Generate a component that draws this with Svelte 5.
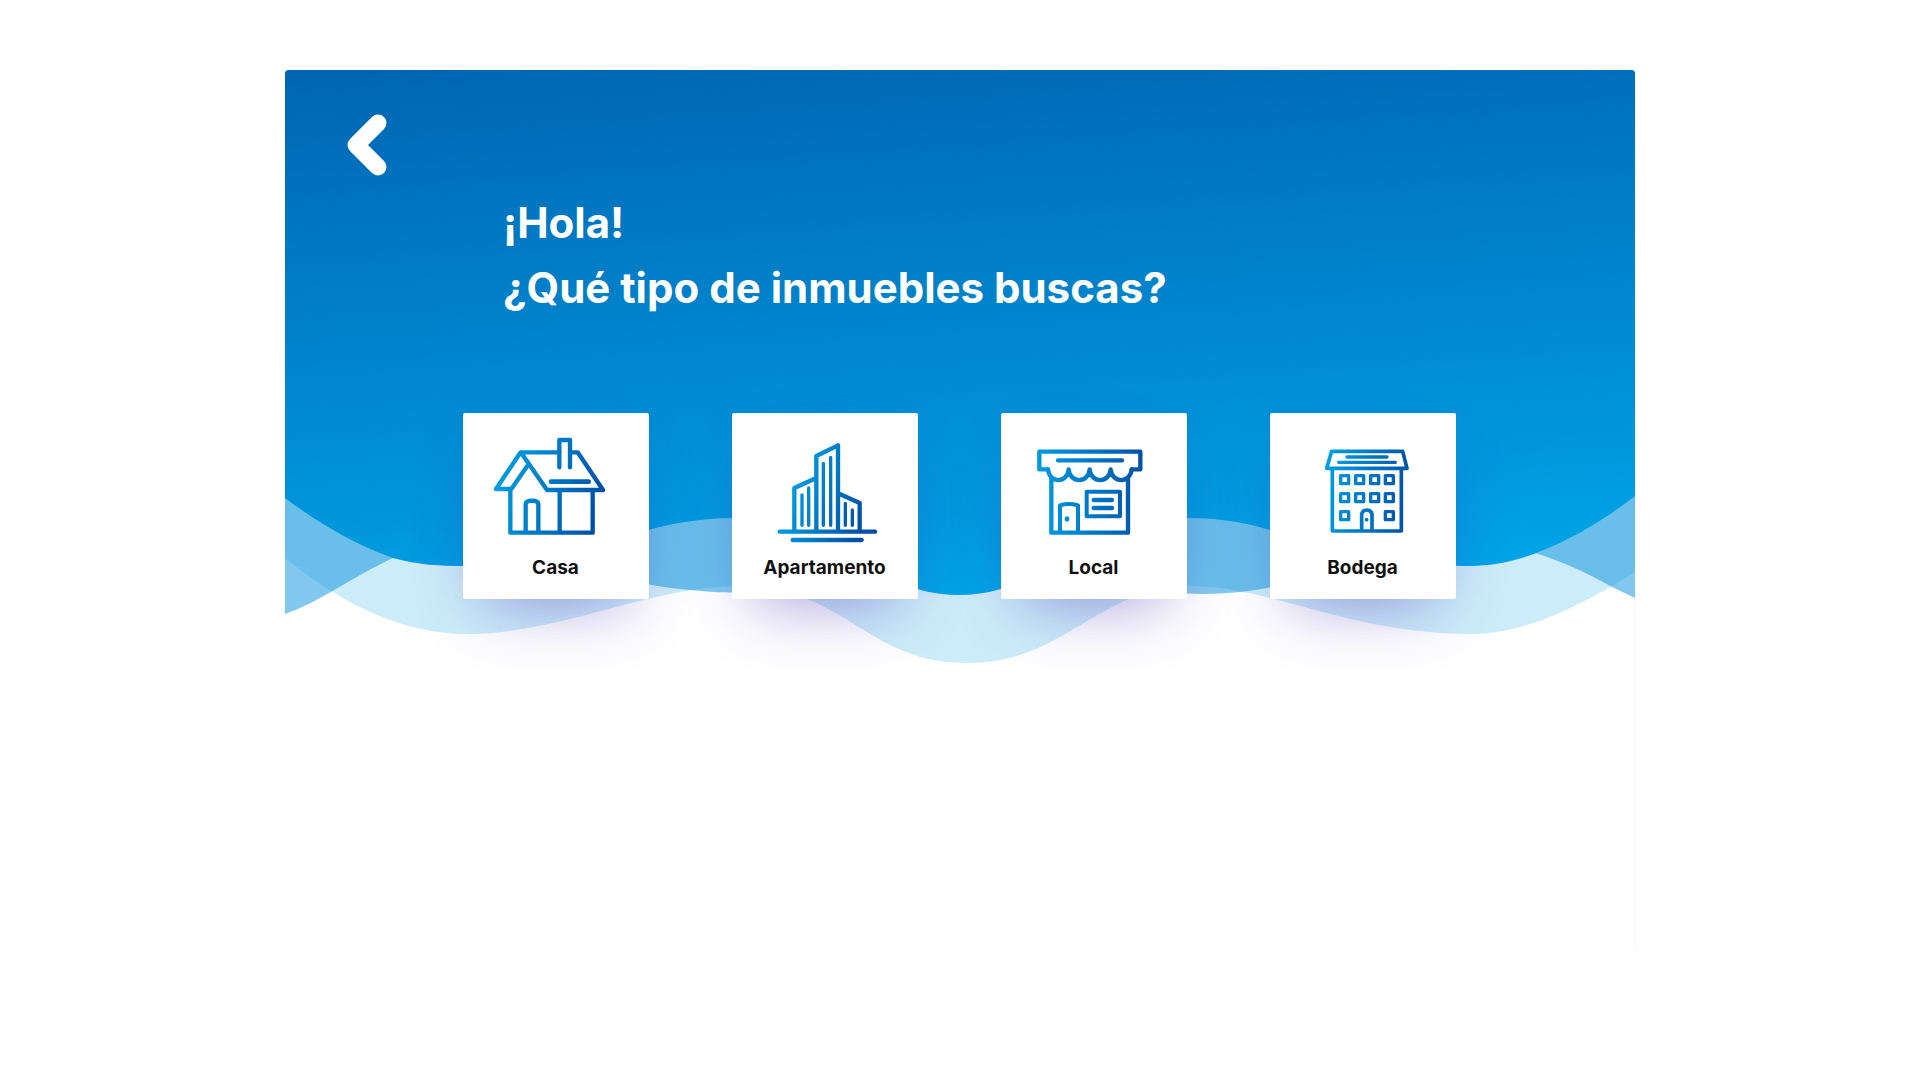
<script>
  const windows = [
    ...[237, 291].flatMap((y) => [284, 329, 374, 418].map((x) => ({ x, y }))),
    { x: 284, y: 345 },
    { x: 418, y: 345 },
  ];

  const types = [
    {
      id: 'casa',
      label: 'Casa',
      viewBox: '68 37 558 429',
      from: [180, 200],
      to: [480, 300],
      shapes: [
        { w: 13, d: 'M357 155H241L167 265H213L265 190M390 155H412L488 268H320L245 160M210 265V396H457V268M358 268V396' },
        { w: 13, d: 'M357 200V118H389V200' },
        { w: 14, d: 'M332 243H445' },
        { w: 13, d: 'M256 392V310C258 297 292 297 294 310V392' },
      ],
    },
    {
      id: 'apartamento',
      label: 'Apartamento',
      viewBox: '65 37 558 429',
      from: [230, 270],
      to: [460, 350],
      shapes: [
        { w: 13, d: 'M252 390V262L318 232M318 390V166L383 134V390M388 280L448 307V390M208 393H494M247 418H454' },
        { w: 10, d: 'M275 283V374M295 262V374M339 188V374M361 170V374M405 308V374M426 328V374' },
      ],
    },
    {
      id: 'local',
      label: 'Local',
      viewBox: '63 37 558 429',
      from: [160, 270],
      to: [500, 240],
      shapes: [
        { w: 13, d: 'M204 206H178V153H481V206H455M214 235V396H444V235' },
        { w: 13, d: 'M204 206C208 249 262 249 266 206C270 249 325 249 329 206C333 249 388 249 392 206C396 249 451 249 455 206' },
        { w: 13, d: 'M234 179H426M341 298H396M341 322H396' },
        { w: 12, d: 'M320 273H420V347H320ZM240 392V314Q267 306 294 314V392' },
        { w: 14, d: 'M261 354V356' },
      ],
    },
    {
      id: 'bodega',
      label: 'Bodega',
      viewBox: '60 37 558 429',
      from: [220, 270],
      to: [480, 300],
      shapes: [
        { w: 11, d: 'M245 152H458L471 203H230ZM247 203V391H454V203M335 388V340A16 16 0 0 1 366 340V388' },
        { w: 10, d: 'M291 169H411M266 185H436' },
        { w: 10, d: windows.map(({ x, y }) => `M${x - 12} ${y - 12}h24v24h-24z`).join('') },
        { w: 11, d: 'M350 357V357' },
      ],
    },
  ];

  let selected = $state('');
</script>

<main class="panel">
  <section class="hero">
    <svg class="waves" viewBox="285 70 1350 600" preserveAspectRatio="none" aria-hidden="true">
      <defs>
        <linearGradient id="sky" gradientUnits="userSpaceOnUse" x1="285" y1="70" x2="325" y2="642">
          <stop offset="0" stop-color="#0065b2" />
          <stop offset="1" stop-color="#00a3e7" />
        </linearGradient>
      </defs>
      <path
        class="wave-light"
        d="M285 70V558C340 602 400 634 467 634C560 634 650 586 740 586C845 586 865 663 968 663C1065 663 1100 586 1190 586C1270 586 1350 634 1470 634C1530 634 1590 600 1635 572V70Z"
      />
      <path
        class="wave-mid"
        d="M285 70V614C320 602 350 578 393 558C440 535 480 545 520 552C570 562 620 583 680 589C760 598 800 590 850 570H1080C1130 590 1180 598 1240 592C1330 582 1380 545 1450 540C1490 536 1560 556 1612 587L1635 598V70Z"
      />
      <path
        class="wave-dark"
        d="M285 70V498C320 524 352 543 393 558C418 565 440 566 463 566C540 566 580 545 648 530C680 521 710 518 735 518C800 518 860 570 917 589C945 597 973 597 1001 589C1060 570 1120 518 1187 518C1215 518 1240 521 1270 530C1340 545 1390 566 1466 566C1490 566 1515 562 1541 551C1572 539 1604 520 1635 496V70Z"
      />
    </svg>

    <div class="content">
      <button class="back" type="button" aria-label="Volver">
        <svg viewBox="0 0 40 62" aria-hidden="true">
          <path d="M31 9L9 31L31 53" />
        </svg>
      </button>

      <h1 class="title">
        <span>¡Hola!</span>
        <span>¿Qué tipo de inmuebles buscas?</span>
      </h1>

      <div class="cards">
        {#each types as type (type.id)}
          <button
            class="card"
            type="button"
            aria-pressed={selected === type.id}
            onclick={() => (selected = type.id)}
          >
            <svg class="icon" viewBox={type.viewBox} aria-hidden="true">
              <defs>
                <linearGradient
                  id={`ink-${type.id}`}
                  gradientUnits="userSpaceOnUse"
                  x1={type.from[0]}
                  y1={type.from[1]}
                  x2={type.to[0]}
                  y2={type.to[1]}
                >
                  <stop offset="0" stop-color="#00a0e3" />
                  <stop offset="1" stop-color="#004fa6" />
                </linearGradient>
              </defs>
              {#each type.shapes as shape}
                <path d={shape.d} stroke={`url(#ink-${type.id})`} stroke-width={shape.w} />
              {/each}
            </svg>
            <span class="label">{type.label}</span>
          </button>
        {/each}
      </div>
    </div>
  </section>
</main>

<style>
  :global(body) {
    margin: 0;
    background: #fff;
  }

  .panel {
    box-sizing: border-box;
    width: 92%;
    max-width: 1350px;
    min-height: calc(100vh - 200px);
    margin: 70px auto;
    border-radius: 4px;
    box-shadow: 1px 0 0 #f6f7fa;
    font-family: Inter, 'Open Sans', sans-serif;
  }

  .hero {
    display: grid;
    border-radius: 4px 4px 0 0;
  }

  .waves,
  .content {
    grid-area: 1 / 1;
    min-width: 0;
  }

  .waves {
    width: 100%;
    height: 100%;
    min-height: 0;
    contain: size;
    border-radius: 4px 4px 0 0;
  }

  .wave-light {
    fill: #cdecf9;
  }

  .wave-mid {
    fill: #0590dc;
    fill-opacity: 0.5;
  }

  .wave-dark {
    fill: url(#sky);
  }

  .content {
    position: relative;
    padding: 44px 64px 71px 62px;
  }

  .back {
    display: block;
    padding: 0;
    border: 0;
    background: none;
    cursor: pointer;
  }

  .back svg {
    display: block;
    width: 40px;
    height: 62px;
  }

  .back path {
    fill: none;
    stroke: #fff;
    stroke-width: 17;
    stroke-linecap: round;
    stroke-linejoin: round;
  }

  .title {
    margin: 14px 0 93px 156px;
    color: #fff;
    font-size: 42px;
    font-weight: 700;
    line-height: 65px;
  }

  .title span {
    display: block;
  }

  .cards {
    display: flex;
    flex-wrap: wrap;
    justify-content: center;
    gap: 83px;
  }

  .card {
    display: flex;
    flex-direction: column;
    width: 186px;
    height: 186px;
    padding: 0;
    border: 0;
    border-radius: 2px;
    background: #fff;
    box-shadow: 0 26px 64px -20px rgba(70, 50, 180, 0.45);
    color: #111;
    font: inherit;
    cursor: pointer;
  }

  .icon {
    display: block;
    width: 186px;
    height: 143px;
  }

  .icon path {
    fill: none;
    stroke-linecap: round;
    stroke-linejoin: round;
  }

  .label {
    font-size: 19px;
    font-weight: 700;
    line-height: 24px;
    text-align: center;
  }
</style>
